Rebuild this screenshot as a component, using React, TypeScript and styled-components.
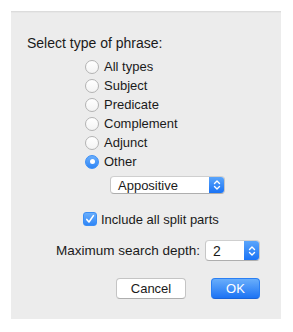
import React, { useState } from "react"
import styled, { createGlobalStyle } from "styled-components"

const GlobalStyle = createGlobalStyle`
  html, body {
    margin: 0;
    padding: 0;
    background: #ffffff;
  }
  body {
    font-family: "Liberation Sans", Arial, sans-serif;
    font-size: 13px;
    color: #1a1a1a;
  }
`

const phraseTypes = ["All types", "Subject", "Predicate", "Complement", "Adjunct", "Other"]

const Stepper = () => (
  <svg width="8" height="12" viewBox="0 0 8 12" fill="none">
    <path d="M1.5 4.5 L4 2 L6.5 4.5" stroke="#fff" strokeWidth="1.4" strokeLinecap="round" strokeLinejoin="round" />
    <path d="M1.5 7.5 L4 10 L6.5 7.5" stroke="#fff" strokeWidth="1.4" strokeLinecap="round" strokeLinejoin="round" />
  </svg>
)

export default function App() {
  const [phrase, setPhrase] = useState("Other")
  const [splitParts, setSplitParts] = useState(true)

  return (
    <>
      <GlobalStyle />
      <Panel>
        <Title>Select type of phrase:</Title>
        <RadioGroup>
          {phraseTypes.map((type) => (
            <RadioRow key={type} onClick={() => setPhrase(type)}>
              <Radio $checked={phrase === type} />
              <span>{type}</span>
            </RadioRow>
          ))}
        </RadioGroup>
        <PopupRow>
          <Popup $width={115}>
            <PopupValue>Appositive</PopupValue>
            <PopupArrow>
              <Stepper />
            </PopupArrow>
          </Popup>
        </PopupRow>
        <CheckRow onClick={() => setSplitParts(!splitParts)}>
          <Checkbox $checked={splitParts}>
            {splitParts && (
              <svg width="10" height="10" viewBox="0 0 10 10" fill="none">
                <path d="M1.8 5.4 L4 8 L8.4 1.6" stroke="#fff" strokeWidth="1.6" strokeLinecap="round" strokeLinejoin="round" />
              </svg>
            )}
          </Checkbox>
          <span>Include all split parts</span>
        </CheckRow>
        <DepthRow>
          <span>Maximum search depth:</span>
          <Popup $width={55} $tall>
            <PopupValue>2</PopupValue>
            <PopupArrow>
              <Stepper />
            </PopupArrow>
          </Popup>
        </DepthRow>
        <ButtonRow>
          <Button $width={70}>Cancel</Button>
          <Button $width={49} $primary>
            OK
          </Button>
        </ButtonRow>
      </Panel>
    </>
  )
}

const Panel = styled.div`
  margin: 11px;
  width: 270px;
  height: 308px;
  box-sizing: border-box;
  padding: 23px 21px 0 16px;
  background: #ececec;
  box-shadow: inset 0 1px 0 #dcdcdc, inset 0 2px 0 #e6e6e6;
  display: flex;
  flex-direction: column;
`

const Title = styled.div`
  font-size: 14px;
  line-height: 16px;
  height: 16px;
  margin-top: 1px;
`

const RadioGroup = styled.div`
  margin: 6px 0 0 58px;
  display: flex;
  flex-direction: column;
`

const RadioRow = styled.label`
  height: 19px;
  display: flex;
  align-items: center;
  gap: 5px;
  cursor: default;
  line-height: 19px;
`

const Radio = styled.span<{ $checked: boolean }>`
  width: 14px;
  height: 14px;
  box-sizing: border-box;
  border-radius: 50%;
  display: flex;
  align-items: center;
  justify-content: center;
  border: 1px solid ${(p) => (p.$checked ? "#3a8ef6" : "#b3b3b3")};
  background: ${(p) =>
    p.$checked ? "linear-gradient(#6aaefb, #2f86f7)" : "linear-gradient(#ffffff, #f3f3f3)"};
  &::after {
    content: "";
    width: 5px;
    height: 5px;
    border-radius: 50%;
    background: #ffffff;
    display: ${(p) => (p.$checked ? "block" : "none")};
  }
`

const PopupRow = styled.div`
  margin: 5px 0 0 83px;
  display: flex;
`

const Popup = styled.div<{ $width: number; $tall?: boolean }>`
  width: ${(p) => p.$width}px;
  height: ${(p) => (p.$tall ? 21 : 18)}px;
  box-sizing: border-box;
  display: flex;
  border-radius: 4px;
  background: #ffffff;
  border: 1px solid #c6c6c6;
  border-top-color: #cfcfcf;
  border-bottom-color: #aeaeae;
  overflow: hidden;
  ${(p) => (p.$tall ? "font-size: 14px;" : "")}
`

const PopupValue = styled.div`
  flex: 1;
  display: flex;
  align-items: center;
  padding-left: 7px;
`

const PopupArrow = styled.div`
  width: 15px;
  display: flex;
  align-items: center;
  justify-content: center;
  background: linear-gradient(#5aa5fb, #1a73f5);
`

const CheckRow = styled.label`
  margin: 18px 0 0 56px;
  height: 14px;
  display: flex;
  align-items: center;
  gap: 4px;
  cursor: default;
`

const Checkbox = styled.span<{ $checked: boolean }>`
  width: 14px;
  height: 14px;
  box-sizing: border-box;
  border-radius: 3px;
  display: flex;
  align-items: center;
  justify-content: center;
  border: 1px solid ${(p) => (p.$checked ? "#3a8ef6" : "#b3b3b3")};
  background: ${(p) => (p.$checked ? "linear-gradient(#6aaefb, #2f86f7)" : "#ffffff")};
`

const DepthRow = styled.div`
  margin-top: 14px;
  display: flex;
  justify-content: flex-end;
  align-items: center;
  gap: 5px;
  font-size: 13.5px;
`

const ButtonRow = styled.div`
  margin-top: 17px;
  display: flex;
  justify-content: flex-end;
  gap: 25px;
`

const Button = styled.button<{ $width: number; $primary?: boolean }>`
  width: ${(p) => p.$width}px;
  height: 21px;
  padding: 0;
  border-radius: 4px;
  font-family: "Liberation Sans", Arial, sans-serif;
  font-size: 13px;
  color: ${(p) => (p.$primary ? "#ffffff" : "#1a1a1a")};
  border: 1px solid ${(p) => (p.$primary ? "#2a7ff3" : "#c4c4c4")};
  border-bottom-color: ${(p) => (p.$primary ? "#1a64d8" : "#aeaeae")};
  background: ${(p) => (p.$primary ? "linear-gradient(#69aefb, #1c73f4)" : "#ffffff")};
`
